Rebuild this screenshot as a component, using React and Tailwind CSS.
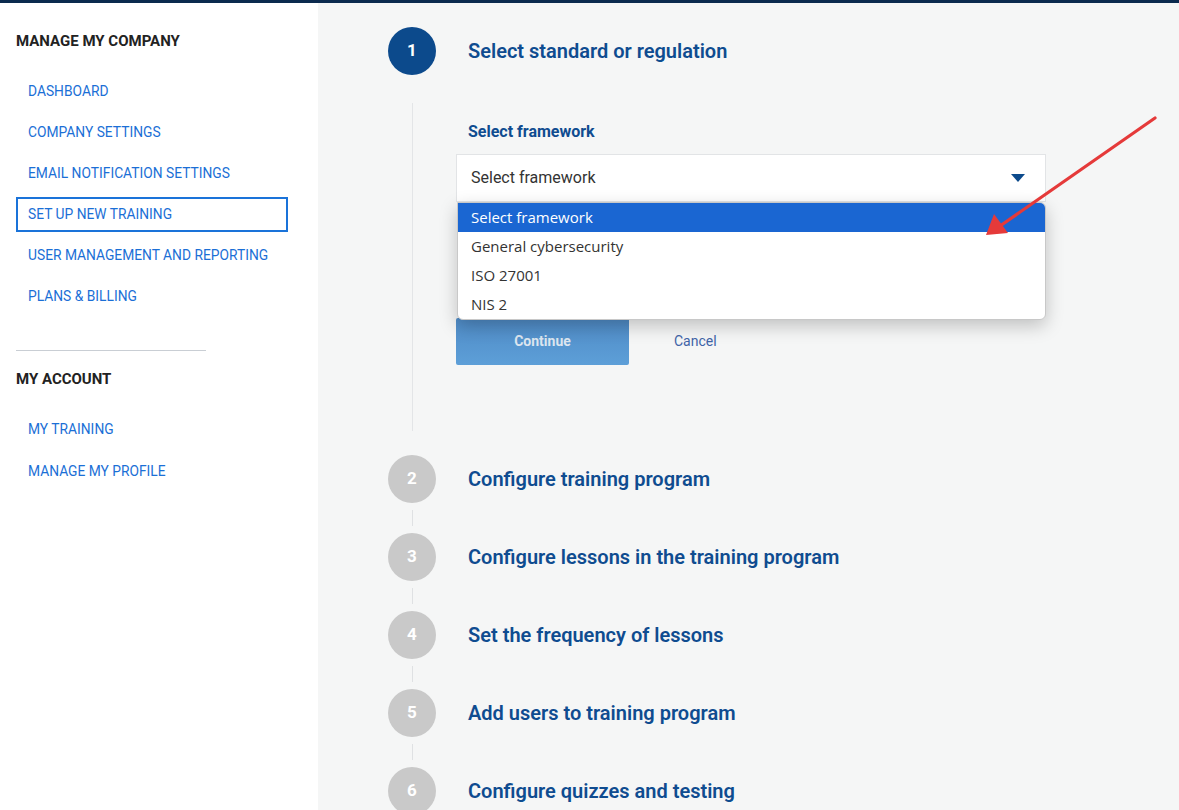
import React from "react";

const companyLinks = [
  "DASHBOARD",
  "COMPANY SETTINGS",
  "EMAIL NOTIFICATION SETTINGS",
  "SET UP NEW TRAINING",
  "USER MANAGEMENT AND REPORTING",
  "PLANS & BILLING",
];

const accountLinks = ["MY TRAINING", "MANAGE MY PROFILE"];

const steps = [
  "Configure training program",
  "Configure lessons in the training program",
  "Set the frequency of lessons",
  "Add users to training program",
  "Configure quizzes and testing",
];

const options = ["General cybersecurity", "ISO 27001", "NIS 2"];

function NavLink({ label, active }) {
  return (
    <div
      className={`flex h-[35px] items-center px-[10px] text-[13.8px] text-[#1b6fd6] ${
        active ? "border-2 border-[#1a73d9]" : "border-2 border-transparent"
      }`}
    >
      {label}
    </div>
  );
}

function Sidebar() {
  return (
    <aside className="w-[318px] shrink-0 bg-white px-4 pt-[27px]">
      <h2 className="text-[15px] font-bold leading-[22px] text-[#222]">MANAGE MY COMPANY</h2>
      <nav className="mt-[22px] flex w-[272px] flex-col gap-[6px]">
        {companyLinks.map((l) => (
          <NavLink key={l} label={l} active={l === "SET UP NEW TRAINING"} />
        ))}
      </nav>
      <div className="mt-[36px] h-px w-[190px] bg-[#c9ced4]" />
      <h2 className="mt-[17px] text-[15px] font-bold leading-[22px] text-[#222]">MY ACCOUNT</h2>
      <nav className="mt-[22px] flex w-[272px] flex-col gap-[7px]">
        {accountLinks.map((l) => (
          <NavLink key={l} label={l} />
        ))}
      </nav>
    </aside>
  );
}

function StepCircle({ n, active }) {
  return (
    <div
      className={`flex h-12 w-12 shrink-0 items-center justify-center rounded-full text-[17px] font-bold text-white ${
        active ? "bg-[#0c4a8c]" : "bg-[#c9c9c9]"
      }`}
    >
      {n}
    </div>
  );
}

function StepHeader({ n, title, active }) {
  return (
    <div className="flex items-center gap-8">
      <StepCircle n={n} active={active} />
      <h3 className="text-[20px] font-semibold text-[#0f4c90]">{title}</h3>
    </div>
  );
}

function FrameworkSelect() {
  return (
    <div className="relative w-[590px]">
      <div className="flex h-12 items-center justify-between border border-[#e2e4e6] bg-white pl-[14px] pr-[20px] text-[16px] text-[#333]">
        <span>Select framework</span>
        <svg width="14" height="8" viewBox="0 0 14 8">
          <path d="M0 0h14L7 8z" fill="#0c4a8c" />
        </svg>
      </div>

      {/* open native dropdown */}
      <div
        className="absolute left-px right-0 top-[48px] z-10 overflow-hidden rounded-b-[6px] rounded-tr-[6px] border border-[#c8c8c8] bg-white shadow-[0_6px_18px_rgba(0,0,0,0.22)]"
        style={{ fontFamily: "'Open Sans', 'Noto Sans', sans-serif" }}
      >
        <div className="flex h-[29px] items-center bg-[#1a66d2] px-[13px] text-[15px] text-white">
          Select framework
        </div>
        {options.map((o) => (
          <div key={o} className="flex h-[29px] items-center px-[13px] text-[15px] text-[#333]">
            {o}
          </div>
        ))}
      </div>
    </div>
  );
}

function ActiveStep() {
  return (
    <div>
      <StepHeader n={1} title="Select standard or regulation" active />
      <div className="ml-6 mt-[28px] border-l border-[#e3e5e7] pb-[66px] pl-[43px] pt-[19px]">
        <label className="block pl-3 text-[16px] font-bold leading-[20px] text-[#0f4c90]">
          Select framework
        </label>
        <div className="mt-[12px]">
          <FrameworkSelect />
        </div>
        <div className="mt-[116px] flex items-center gap-[45px]">
          <button className="h-[47px] w-[173px] rounded-[2px] bg-gradient-to-b from-[#4f8bc6] to-[#5d9fd8] text-[14px] font-bold text-[#dde6f0]">
            Continue
          </button>
          <button className="text-[14px] text-[#3f64a8]">Cancel</button>
        </div>
      </div>
    </div>
  );
}

function Arrow() {
  return (
    <svg
      className="pointer-events-none absolute left-0 top-0 z-20"
      width="1179"
      height="810"
      viewBox="0 0 1179 810"
    >
      <line x1="1155" y1="118" x2="1000" y2="226" stroke="#e53a3a" strokeWidth="3.2" strokeLinecap="round" />
      <path d="M986 235 L994 214 L1008 233 Z" fill="#e53a3a" />
    </svg>
  );
}

export default function App() {
  return (
    <div
      className="relative flex h-[810px] w-[1179px] flex-col overflow-hidden bg-[#f5f6f6]"
      style={{ fontFamily: "Roboto, 'Liberation Sans', sans-serif" }}
    >
      <div className="h-[3px] shrink-0 bg-[#0b2a4e]" />
      <div className="flex flex-1">
        <Sidebar />
        <main className="flex-1 pl-[70px] pt-[24px]">
          <ActiveStep />
          <div className="mt-[24px] flex flex-col">
            {steps.map((s, i) => (
              <div key={s}>
                {i > 0 && (
                  <div className="flex h-[30px] w-12 items-center justify-center">
                    <div className="h-4 w-px bg-[#dfe1e3]" />
                  </div>
                )}
                <StepHeader n={i + 2} title={s} />
              </div>
            ))}
          </div>
        </main>
      </div>
      <Arrow />
    </div>
  );
}
